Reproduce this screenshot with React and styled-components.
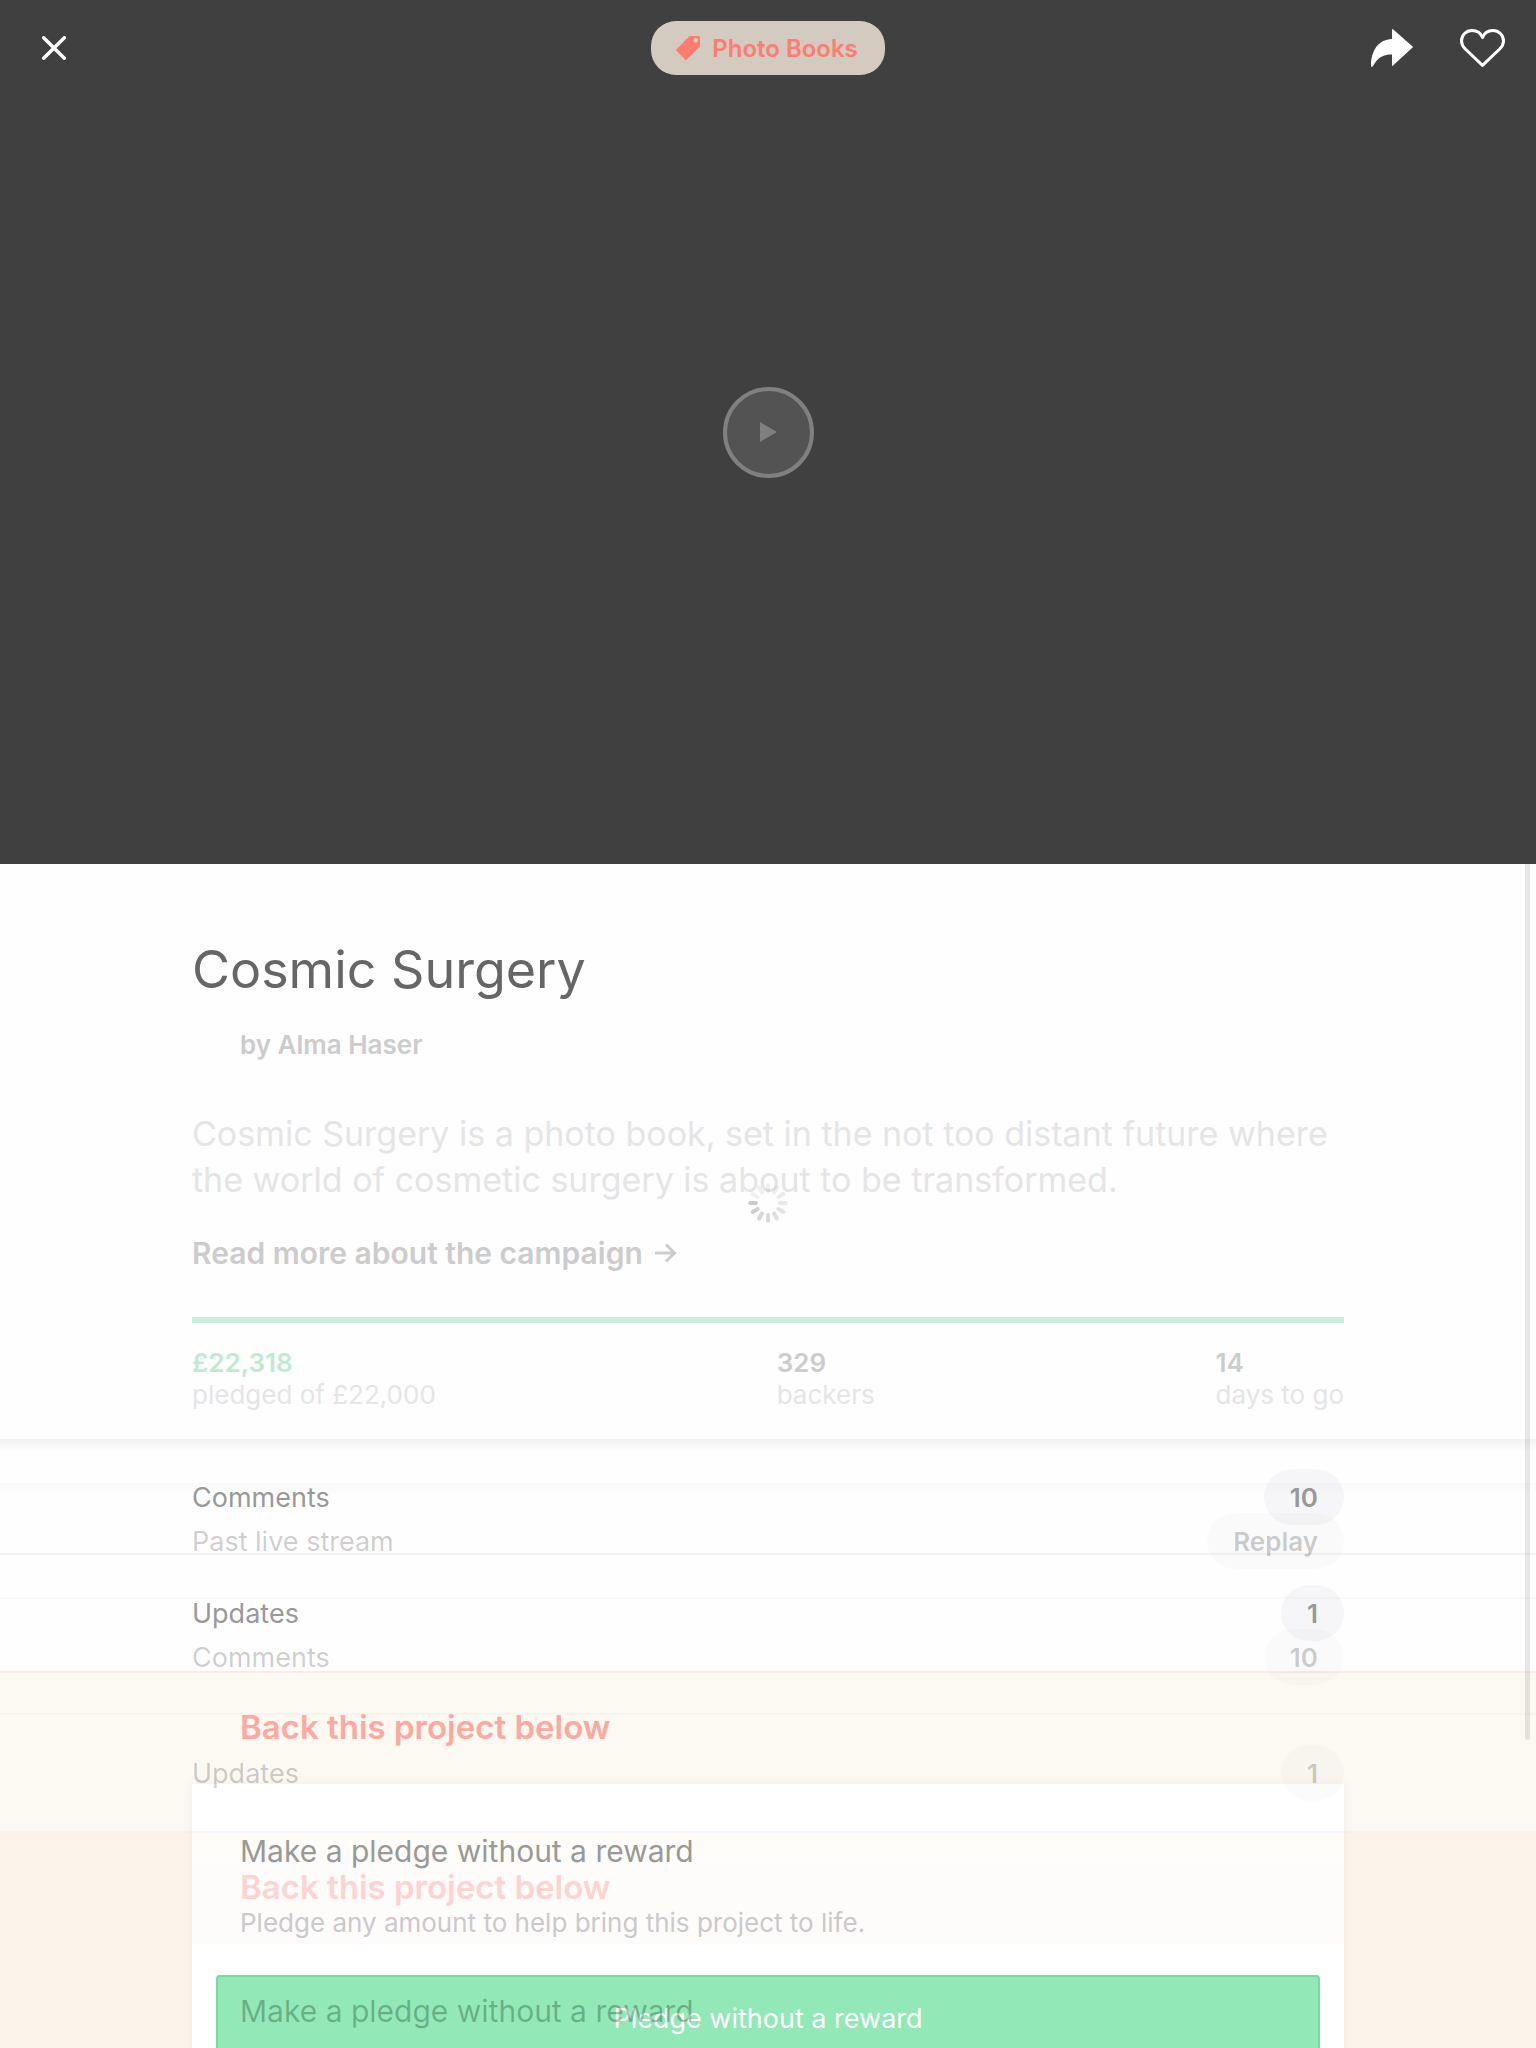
import React from 'react';
import styled, { createGlobalStyle, css } from 'styled-components';

const GlobalStyle = createGlobalStyle`
  *, *::before, *::after { box-sizing: border-box; }
  body { margin: 0; background: #fefefe; font-family: Inter, "Noto Sans", sans-serif; }
  h1, h2, h3, p, dl, dt, dd { margin: 0; }
  button { font: inherit; padding: 0; border: 0; background: none; cursor: pointer; }
  a { color: inherit; text-decoration: none; }
`;

const Screen = styled.div`
  display: flex;
  flex-direction: column;
  height: 100vh;
  overflow: hidden;
`;

/* Video hero: the toolbar and the play button share a single grid cell. */
const Hero = styled.header`
  flex: none;
  display: grid;
  aspect-ratio: 16 / 9;
  background: #404040;

  > * { grid-area: 1 / 1; }
`;

const Toolbar = styled.div`
  align-self: start;
  display: grid;
  grid-template-columns: 1fr auto 1fr;
  align-items: center;
  padding: 21px 0;
`;

const ToolGroup = styled.div`
  display: flex;
  align-items: center;
  justify-content: ${(p) => (p.$end ? 'flex-end' : 'flex-start')};
  gap: 47px;
  padding: 0 31px 0 42px;
`;

const IconButton = styled.button`
  display: flex;
  color: #fff;
`;

const Category = styled.a`
  display: flex;
  align-items: center;
  gap: 12px;
  height: 54px;
  padding: 0 27px 0 25px;
  border-radius: 25px;
  background: #d3cbbf;
  color: #ff7d70;
  font-size: 24px;
  font-weight: 600;
`;

const PlayButton = styled.button`
  place-self: center;
  display: flex;
  align-items: center;
  justify-content: center;
  width: 91px;
  height: 91px;
  border: 4px solid #808080;
  border-radius: 50%;
  background: #535353;
  color: #808080;
`;

const Body = styled.main`
  position: relative;
  flex: 1;
  min-height: 0;
  overflow: hidden;
`;

const ScrollThumb = styled.div`
  position: absolute;
  top: 0;
  right: 6px;
  width: 5px;
  height: 74%;
  border-radius: 0 0 3px 3px;
  background: rgba(0, 0, 0, 0.09);
`;

const Loader = styled.div`
  position: absolute;
  top: 319px;
  left: 50%;
  display: flex;
  margin-left: -20px;
`;

const Container = styled.div`
  width: 75%;
  margin: 0 auto;
`;

const Summary = styled.section`
  padding: 74px 0 28px;
`;

const Title = styled.h1`
  color: #666;
  font-size: 52px;
  font-weight: 400;
  line-height: 64px;
`;

const Author = styled.p`
  margin-top: 27px;
  padding-left: 48px;
  color: #ccc;
  font-size: 26px;
  font-weight: 600;
  line-height: 32px;
`;

const Blurb = styled.p`
  margin-top: 50px;
  color: #e5e5e7;
  font-size: 34px;
  line-height: 46px;
`;

const ReadMore = styled.a`
  display: flex;
  align-items: center;
  gap: 12px;
  width: max-content;
  margin-top: 30px;
  color: #ccc;
  font-size: 30px;
  font-weight: 600;
  line-height: 40px;
`;

const Progress = styled.div`
  height: 6px;
  margin-top: 44px;
  background: #c8f1da;
`;

const Stats = styled.dl`
  display: flex;
  justify-content: space-between;
  margin-top: 24px;
  font-size: 26px;
  line-height: 32px;
`;

const Stat = styled.div`
  display: flex;
  flex-direction: column;
`;

const StatValue = styled.dd`
  color: ${(p) => (p.$funded ? '#bdebd0' : '#ccc')};
  font-weight: 600;
`;

const StatLabel = styled.dt`
  order: 1;
  color: #e5e5e7;
`;

/* Two states of the same list, stacked while one dissolves into the other. */
const Crossfade = styled.div`
  display: grid;
  grid-template-columns: 1fr;
  align-items: start;
`;

const Layer = styled.div`
  grid-area: 1 / 1;
  ${(p) => p.$fading && css`
    padding-top: 44px;
    pointer-events: none;
  `}
`;

const Menu = styled.nav`
  background: linear-gradient(
    rgba(0, 0, 0, ${(p) => (p.$fading ? 0.018 : 0.05)}),
    rgba(0, 0, 0, 0) 12px
  );
`;

const MenuRow = styled.a`
  display: block;
  color: ${(p) => (p.$fading ? 'rgba(0, 0, 0, 0.2)' : '#999')};

  &:not(:last-child) {
    box-shadow: inset 0 -2px ${(p) => (p.$fading ? 'rgba(0, 0, 0, 0.02)' : '#f2f2f4')};
  }
`;

const MenuRowInner = styled(Container)`
  display: flex;
  align-items: center;
  justify-content: space-between;
  height: 116px;
  font-size: 27px;
`;

const Badge = styled.span`
  display: flex;
  align-items: center;
  height: 56px;
  padding: 0 26px;
  border-radius: 28px;
  background: ${(p) => (p.$fading ? 'rgba(0, 0, 0, 0.016)' : '#f6f6f9')};
  font-size: 26px;
  font-weight: 600;
`;

const Rewards = styled.section`
  padding: 34px 0 36px;
  border-top: 2px solid ${(p) => (p.$fading ? 'transparent' : '#fde9e5')};
  background: ${(p) => (p.$fading
    ? 'none'
    : 'linear-gradient(#fcf9f2 158px, #fbf1e8 158px, #fbf1e8 160px, #fcf4ea 160px)')};
`;

const RewardsTitle = styled.h2`
  padding: 0 48px;
  color: ${(p) => (p.$fading ? '#ffd3d0' : '#ffa8a0')};
  font-size: 33px;
  font-weight: 600;
  line-height: 40px;
`;

const RewardCard = styled.article`
  margin-top: 37px;
  padding: 47px 24px 24px;
  ${(p) => !p.$fading && css`
    background: linear-gradient(#fff 47px, #fef5f3 47px, #fef5f3 49px, #fefdfa 49px, #fdfcfa 160px, #fff 160px);
    box-shadow: 0 0 10px rgba(60, 40, 60, 0.06);
  `}
`;

const RewardName = styled.h3`
  padding: 0 24px;
  color: ${(p) => (p.$fading ? 'rgba(0, 30, 10, 0.28)' : '#999996')};
  font-size: 30px;
  font-weight: 400;
  line-height: 40px;
`;

const RewardText = styled.p`
  margin-top: 36px;
  padding: 0 24px;
  color: #ccc9cc;
  font-size: 26px;
  line-height: 32px;
`;

const PledgeButton = styled.button`
  display: block;
  width: 100%;
  height: 86px;
  margin-top: 36px;
  border: 2px solid #7dd9a0;
  border-radius: 4px;
  background: #92e8b6;
  color: #fff;
  font-size: 27px;
`;

const CloseIcon = () => (
  <svg width="24" height="24" viewBox="0 0 24 24" fill="none" stroke="currentColor" strokeWidth="3.4" strokeLinecap="round">
    <path d="M1.7 1.7l20.6 20.6M22.3 1.7l-20.6 20.6" />
  </svg>
);

const TagIcon = () => (
  <svg width="24" height="24" viewBox="0 0 24 24" fill="currentColor" fillRule="evenodd">
    <path d="M13.4 0H22.6Q24 0 24 1.4V10.4L10.7 23.7Q10 24.3 9.3 23.7L.4 14.8Q-.3 14.1 .4 13.4ZM19.7 1.9a2.4 2.4 0 1 0 0 4.8a2.4 2.4 0 1 0 0-4.8Z" />
  </svg>
);

const ShareIcon = () => (
  <svg width="42" height="38" viewBox="0 0 42 38" fill="currentColor">
    <path d="M21 .6Q21-.4 22 .3L41.6 17.5Q42.2 18 41.6 18.5L22 36.6Q21 37.4 21 36.4V25.4C13 25.4 7 27.5 2 37Q1.4 38 .6 38Q0 38 0 37C0 22 7 10.5 21 10Z" />
  </svg>
);

const HeartIcon = () => (
  <svg width="45" height="38" viewBox="0 0 45 38" fill="none" stroke="currentColor" strokeWidth="3" strokeLinejoin="round">
    <path d="M22.5 36.3L5.3 20C2.5 17.2 1.5 14.6 1.5 12C1.5 6 6.2 1.5 12 1.5C17 1.5 21 4.5 22.5 8.5C24 4.5 28 1.5 33 1.5C38.8 1.5 43.5 6 43.5 12C43.5 14.6 42.5 17.2 39.7 20Z" />
  </svg>
);

const PlayIcon = () => (
  <svg width="18" height="20" viewBox="0 0 18 20" fill="currentColor">
    <path d="M1 0l17 10L1 20z" />
  </svg>
);

const ArrowIcon = () => (
  <svg width="22" height="20" viewBox="0 0 22 20" fill="none" stroke="currentColor" strokeWidth="3">
    <path d="M0 10h20M11 1.5l8.5 8.5l-8.5 8.5" />
  </svg>
);

/* Spokes run counter-clockwise from the left one, darkest first. */
const SPOKES = [0.2, 0.18, 0.15, 0.14, 0.12, 0.1, 0.08, 0.07, 0.06, 0.06, 0.05, 0.05];

const Spinner = () => (
  <svg width="40" height="40" viewBox="-20 -20 40 40" stroke="#000" strokeWidth="4" strokeLinecap="round" role="img" aria-label="Loading">
    {SPOKES.map((opacity, i) => (
      <path key={i} d="M-17.8 0H-12" opacity={opacity} transform={`rotate(${-30 * i})`} />
    ))}
  </svg>
);

const CURRENT_ROWS = [
  { label: 'Comments', badge: '10' },
  { label: 'Updates', badge: '1' },
];

const FADING_ROWS = [{ label: 'Past live stream', badge: 'Replay' }, ...CURRENT_ROWS];

function ProjectMenu({ rows, fading }) {
  return (
    <Menu $fading={fading}>
      {rows.map((row) => (
        <MenuRow key={row.label} href="#" $fading={fading} tabIndex={fading ? -1 : undefined}>
          <MenuRowInner>
            <span>{row.label}</span>
            <Badge $fading={fading}>{row.badge}</Badge>
          </MenuRowInner>
        </MenuRow>
      ))}
    </Menu>
  );
}

function ProjectRewards({ fading, children }) {
  return (
    <Rewards $fading={fading}>
      <Container>
        <RewardsTitle $fading={fading}>Back this project below</RewardsTitle>
        <RewardCard $fading={fading}>
          <RewardName $fading={fading}>Make a pledge without a reward</RewardName>
          {children}
        </RewardCard>
      </Container>
    </Rewards>
  );
}

export default function App() {
  return (
    <Screen>
      <GlobalStyle />
      <Hero>
        <PlayButton type="button" aria-label="Play video"><PlayIcon /></PlayButton>
        <Toolbar>
          <ToolGroup>
            <IconButton type="button" aria-label="Close"><CloseIcon /></IconButton>
          </ToolGroup>
          <Category href="#"><TagIcon />Photo Books</Category>
          <ToolGroup $end>
            <IconButton type="button" aria-label="Share"><ShareIcon /></IconButton>
            <IconButton type="button" aria-label="Save project"><HeartIcon /></IconButton>
          </ToolGroup>
        </Toolbar>
      </Hero>

      <Body>
        <Container>
          <Summary>
            <Title>Cosmic Surgery</Title>
            <Author>by Alma Haser</Author>
            <Blurb>
              Cosmic Surgery is a photo book, set in the not too distant future where the world of
              cosmetic surgery is about to be transformed.
            </Blurb>
            <ReadMore href="#">Read more about the campaign <ArrowIcon /></ReadMore>
            <Progress role="progressbar" aria-label="Funding" aria-valuenow={100} aria-valuemin={0} aria-valuemax={100} />
            <Stats>
              <Stat>
                <StatLabel>pledged of £22,000</StatLabel>
                <StatValue $funded>£22,318</StatValue>
              </Stat>
              <Stat>
                <StatLabel>backers</StatLabel>
                <StatValue>329</StatValue>
              </Stat>
              <Stat>
                <StatLabel>days to go</StatLabel>
                <StatValue>14</StatValue>
              </Stat>
            </Stats>
          </Summary>
        </Container>

        <Crossfade>
          <Layer>
            <ProjectMenu rows={CURRENT_ROWS} />
            <ProjectRewards>
              <RewardText>Pledge any amount to help bring this project to life.</RewardText>
              <PledgeButton type="button">Pledge without a reward</PledgeButton>
            </ProjectRewards>
          </Layer>
          <Layer $fading aria-hidden="true">
            <ProjectMenu rows={FADING_ROWS} fading />
            <ProjectRewards fading />
          </Layer>
        </Crossfade>

        <Loader><Spinner /></Loader>
        <ScrollThumb />
      </Body>
    </Screen>
  );
}
